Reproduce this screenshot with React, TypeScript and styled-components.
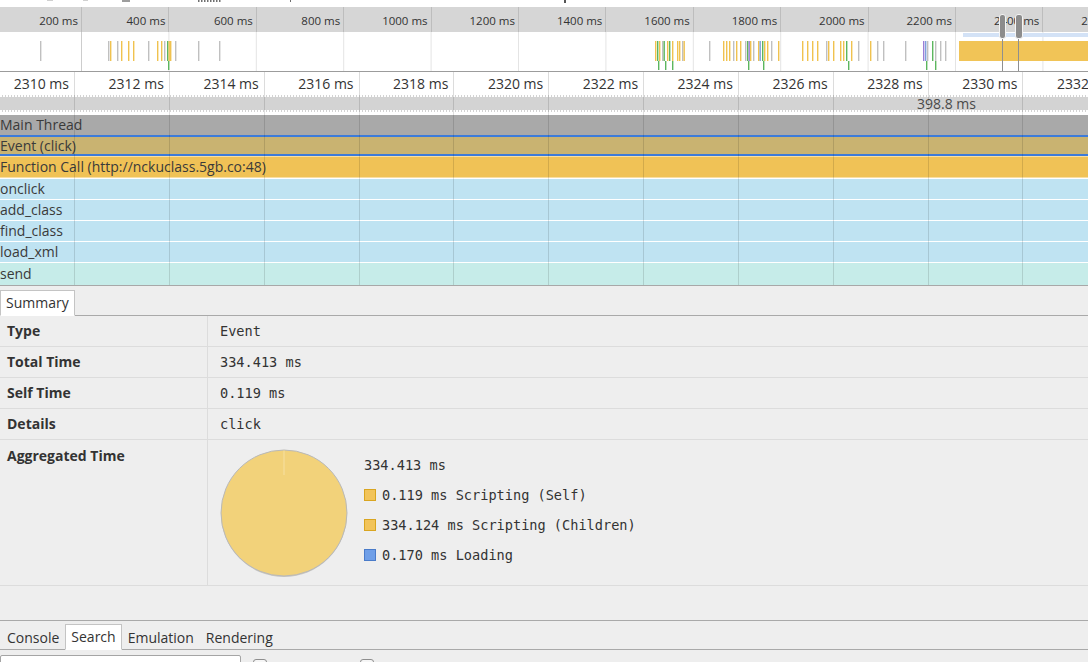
import React from "react";
import styled, { createGlobalStyle } from "styled-components";

const Global = createGlobalStyle`
  html, body { margin: 0; padding: 0; background: #eeeeee; }
  body { font-family: "Open Sans", "Noto Sans", sans-serif; color: #333; }
  * { box-sizing: border-box; }
`;

const Page = styled.div`
  width: 1088px;
  height: 662px;
  overflow: hidden;
  display: flex;
  flex-direction: column;
  background: #eeeeee;
`;

const TopStrip = styled.div`
  flex: none;
  height: 7px;
  background: #fff;
  display: flex;
`;

const Overview = styled.div`
  flex: none;
  position: relative;
  background: #fff;
  border-bottom: 1px solid #9c9c9c;
  overflow: hidden;
`;

const OverviewHeader = styled.div`
  display: flex;
  height: 25px;
  background: #d6d6d6;
  margin-left: -5.4px;
`;

const OverviewTick = styled.div`
  flex: none;
  width: 87.4px;
  border-right: 1px solid #bdbdbd;
  text-align: right;
  padding-right: 3px;
  font-size: 11.5px;
  line-height: 27px;
  color: #333;
  white-space: nowrap;
`;

const OverviewBody = styled.svg`
  display: block;
`;

const Handle = styled.div<{ $left: number; $w: number }>`
  position: absolute;
  top: 7px;
  left: ${(p) => p.$left}px;
  width: ${(p) => p.$w}px;
  height: 25px;
  background: #8c8c8c;
  border: 1px solid #f4f4f4;
  border-radius: 3px;
`;

const Ruler = styled.div`
  flex: none;
  height: 23px;
  background: #fff;
  overflow: hidden;
`;

const TickRow = styled.div`
  display: flex;
  height: 100%;
  margin-left: -19.85px;
`;

const RulerTick = styled.div`
  flex: none;
  width: 94.85px;
  border-right: 1px solid #dcdcdc;
  text-align: right;
  padding-right: 5px;
  font-size: 14px;
  line-height: 23px;
  color: #333;
  white-space: nowrap;
`;

const Timeline = styled.div`
  flex: none;
  position: relative;
  background: #fff;
  border-bottom: 1px solid #a8a8a8;
  overflow: hidden;
`;

const GridOverlay = styled.div`
  position: absolute;
  inset: 0;
  display: flex;
  margin-left: -19.85px;
  pointer-events: none;
`;

const GridCell = styled.div`
  flex: none;
  width: 94.85px;
  height: 100%;
  border-right: 1px solid rgba(0, 0, 0, 0.12);
`;

const Band = styled.div`
  height: 17px;
  margin-bottom: 3px;
  padding-left: 917px;
  font-size: 14px;
  line-height: 17px;
  color: #4a4a4a;
  white-space: nowrap;
  background:
    repeating-linear-gradient(90deg, #fff 0 2px, transparent 2px 3px) top left / 100% 2px no-repeat,
    repeating-linear-gradient(90deg, #fff 0 2px, transparent 2px 3px) bottom left / 100% 2px no-repeat,
    #d3d3d3;
`;

const Track = styled.div<{ $bg: string; $edge?: string; $ew?: number; $h?: number; $gap?: number }>`
  height: ${(p) => (p.$h ?? 20) + 2 * (p.$edge ? p.$ew ?? 1 : 0)}px;
  margin-top: ${(p) => p.$gap ?? 0}px;
  background: ${(p) => p.$bg};
  border-top: ${(p) => (p.$edge ? `${p.$ew ?? 1}px solid ${p.$edge}` : "none")};
  border-bottom: ${(p) => (p.$edge ? `${p.$ew ?? 1}px solid ${p.$edge}` : "none")};
  font-size: 14px;
  line-height: ${(p) => p.$h ?? 20}px;
  color: #3a3a3a;
  white-space: nowrap;
  overflow: hidden;
`;

const TabStrip = styled.div`
  flex: none;
  height: 30px;
  display: flex;
  align-items: flex-end;
  border-bottom: 1px solid #a9a9a9;
  background: #eeeeee;
`;

const Tab = styled.div<{ $active?: boolean }>`
  height: ${(p) => (p.$active ? 26 : 25)}px;
  margin-bottom: -1px;
  padding: 0 5px;
  font-size: 14px;
  line-height: 24px;
  color: #333;
  background: ${(p) => (p.$active ? "#fff" : "transparent")};
  border: 1px solid ${(p) => (p.$active ? "#c4c4c4" : "transparent")};
  border-bottom: ${(p) => (p.$active ? "1px solid #fff" : "none")};
  white-space: nowrap;
`;

const Table = styled.div`
  flex: none;
  display: flex;
  flex-direction: column;
`;

const Row = styled.div<{ $h?: number }>`
  display: grid;
  grid-template-columns: 208px 1fr;
  height: ${(p) => p.$h ?? 31}px;
  border-bottom: 1px solid #dcdcdc;
`;

const Label = styled.div<{ $top?: boolean }>`
  border-right: 1px solid #dcdcdc;
  padding-left: 7px;
  padding-top: ${(p) => (p.$top ? 6 : 0)}px;
  display: flex;
  align-items: ${(p) => (p.$top ? "flex-start" : "center")};
  font-size: 14px;
  font-weight: 700;
  line-height: 20px;
  color: #333;
`;

const Value = styled.div`
  padding-left: 12px;
  display: flex;
  align-items: center;
  font-family: "DejaVu Sans Mono", "Liberation Mono", monospace;
  font-size: 13.6px;
  color: #333;
  white-space: nowrap;
`;

const AggValue = styled.div`
  padding: 9px 0 0 12px;
  display: flex;
  gap: 14px;
  font-family: "DejaVu Sans Mono", "Liberation Mono", monospace;
  font-size: 13.6px;
  color: #333;
`;

const Legend = styled.div`
  display: flex;
  flex-direction: column;
  padding-top: 1px;
`;

const LegendLine = styled.div`
  height: 30px;
  display: flex;
  align-items: center;
  white-space: nowrap;
`;

const Swatch = styled.span<{ $fill: string; $line: string }>`
  flex: none;
  width: 12px;
  height: 12px;
  margin-right: 6px;
  background: ${(p) => p.$fill};
  border: 1px solid ${(p) => p.$line};
`;

const Spacer = styled.div`
  flex: none;
  height: 34px;
`;

const Drawer = styled.div`
  flex: none;
  border-top: 1px solid #a9a9a9;
`;

const DrawerTabs = styled.div`
  height: 29px;
  display: flex;
  align-items: flex-end;
  padding-left: 1px;
  border-bottom: 1px solid #a9a9a9;
`;

const InputRow = styled.div`
  display: flex;
  align-items: flex-start;
  padding-top: 5px;
  height: 40px;
`;

const SearchInput = styled.div`
  width: 241px;
  height: 22px;
  background: #fff;
  border: 1px solid #a5a5a5;
  border-radius: 2px;
`;

const Check = styled.div<{ $ml: number }>`
  margin-left: ${(p) => p.$ml}px;
  margin-top: 4px;
  width: 14px;
  height: 14px;
  border: 1px solid #8e8e8e;
  border-radius: 3px;
  background: #f6f6f6;
`;

const C = { Y: "#f0c24f", G: "#c0c0c0", Gr: "#5cb65e", P: "#9a7fd6", B: "#7fa1dc" };

const BARS: [number, string][] = [
  [40, C.G],
  [108, C.G], [110, C.Y], [117, C.G], [121, C.Y], [128, C.Y], [133, C.Y], [148, C.G], [157, C.Y],
  [161, C.Y], [164, C.G], [167, C.Gr], [168.5, C.Y], [170, C.Y], [175, C.G], [198, C.G], [219, C.G],
  [655, C.Y], [657, C.Gr], [659, C.Y], [662, C.G], [663.5, C.Gr], [667, C.Y], [669, C.Gr], [672, C.Y],
  [677, C.Y], [679, C.Y], [682, C.G], [683.5, C.Y],
  [709, C.G], [723, C.Y], [726, C.Y], [729, C.Y], [733, C.G], [736, C.Y], [740, C.Y], [745, C.G],
  [747, C.Gr], [748.5, C.P], [750, C.Y], [753, C.G], [758, C.Y], [759.5, C.B], [762, C.Gr], [764, C.Y],
  [767, C.Y], [771, C.G], [778, C.Y],
  [802, C.Y], [807, C.Y], [812, C.Y], [817, C.Y], [826, C.G], [828, C.Y], [833, C.Y], [840, C.Y],
  [843, C.Y], [846, C.Gr], [851, C.Y], [858, C.G],
  [870, C.Y], [877, C.G], [883, C.G], [905, C.G], [923, C.P], [925, C.B], [927, C.G], [932, C.Gr],
  [935, C.G], [940, C.G], [945, C.G],
];
const LOW = [168, 658, 665, 672, 748, 763, 848, 926, 935];

const overviewLabels = Array.from({ length: 13 }, (_, i) => `${(i + 1) * 200} ms`);
const rulerLabels = Array.from({ length: 12 }, (_, i) => `${2310 + i * 2} ms`);

function OverviewChart() {
  const lines = Array.from({ length: 12 }, (_, k) => 82 + 87.4 * k);
  return (
    <OverviewBody width={1088} height={39} viewBox="0 0 1088 39">
      {lines.map((x, i) => (
        <rect key={i} x={x - 1} y={0} width={1} height={39} fill={i === 0 ? "#cdcdcd" : "#e4e4e4"} />
      ))}
      {BARS.map(([x, c], i) => (
        <rect key={i} x={x} y={9} width={1.4} height={20} fill={c} />
      ))}
      {LOW.map((x, i) => (
        <rect key={i} x={x} y={29} width={1.4} height={9} fill={C.Gr} />
      ))}
      <rect x={963} y={1} width={125} height={4} fill="#d3e2f6" />
      <rect x={959} y={9} width={129} height={20} fill="#f1c457" />
      <rect x={1002} y={0} width={1} height={39} fill="#8f8f8f" />
      <rect x={1018} y={0} width={1} height={39} fill="#8f8f8f" />
    </OverviewBody>
  );
}

function TopMarks() {
  return (
    <svg width={1088} height={7} viewBox="0 0 1088 7">
      <rect x={47} y={0} width={6} height={1} fill="#d0d0d0" />
      <rect x={83} y={0} width={5} height={1} fill="#d0d0d0" />
      <rect x={122} y={0} width={8} height={2} fill="#9d9d9d" />
      {[198, 201, 204, 207, 210, 213, 216, 219].map((x) => (
        <rect key={x} x={x} y={0} width={1.5} height={2} fill="#707070" />
      ))}
      <rect x={290} y={0} width={1} height={2} fill="#6e6e6e" />
      <rect x={564} y={0} width={2} height={3} fill="#555" />
    </svg>
  );
}

function Pie() {
  return (
    <svg width={130} height={130} viewBox="0 0 130 130">
      <circle cx={64} cy={65} r={63} fill="#c9c9c9" />
      <circle cx={64} cy={64} r={63} fill="#f2d27a" stroke="#b9b9b9" strokeWidth={1} />
      <line x1={64} y1={1.5} x2={64} y2={26} stroke="#f6e0a2" strokeWidth={1} />
    </svg>
  );
}

export default function App() {
  return (
    <Page>
      <Global />
      <TopStrip>
        <TopMarks />
      </TopStrip>
      <Overview>
        <OverviewHeader>
          {overviewLabels.map((l) => (
            <OverviewTick key={l}>{l}</OverviewTick>
          ))}
        </OverviewHeader>
        <OverviewChart />
        <Handle $left={999} $w={7} />
        <Handle $left={1015} $w={8} />
      </Overview>
      <Ruler>
        <TickRow>
          {rulerLabels.map((l) => (
            <RulerTick key={l}>{l}</RulerTick>
          ))}
        </TickRow>
      </Ruler>
      <Timeline>
        <Band>398.8 ms</Band>
        <Track $bg="#a9a9a9">Main Thread</Track>
        <Track $bg="#c9b371" $edge="#3d7bd9" $ew={2} $h={17}>
          Event (click)
        </Track>
        <Track $bg="#f0c256" $edge="#f8dfa2">Function Call (http://nckuclass.5gb.co:48)</Track>
        <Track $bg="#bfe3f2" $gap={1}>onclick</Track>
        <Track $bg="#bfe3f2" $gap={1}>add_class</Track>
        <Track $bg="#bfe3f2" $gap={1}>find_class</Track>
        <Track $bg="#bfe3f2" $gap={1}>load_xml</Track>
        <Track $bg="#c6ece9" $gap={1} $h={22}>send</Track>
        <GridOverlay>
          {rulerLabels.map((l) => (
            <GridCell key={l} />
          ))}
        </GridOverlay>
      </Timeline>
      <TabStrip>
        <Tab $active>Summary</Tab>
      </TabStrip>
      <Table>
        <Row>
          <Label>Type</Label>
          <Value>Event</Value>
        </Row>
        <Row>
          <Label>Total Time</Label>
          <Value>334.413 ms</Value>
        </Row>
        <Row>
          <Label>Self Time</Label>
          <Value>0.119 ms</Value>
        </Row>
        <Row>
          <Label>Details</Label>
          <Value>click</Value>
        </Row>
        <Row $h={146}>
          <Label $top>Aggregated Time</Label>
          <AggValue>
            <Pie />
            <Legend>
              <LegendLine>334.413 ms</LegendLine>
              <LegendLine>
                <Swatch $fill="#f2c45a" $line="#d9a520" />
                0.119 ms Scripting (Self)
              </LegendLine>
              <LegendLine>
                <Swatch $fill="#f2c45a" $line="#d9a520" />
                334.124 ms Scripting (Children)
              </LegendLine>
              <LegendLine>
                <Swatch $fill="#6f9fe8" $line="#4a7bc9" />
                0.170 ms Loading
              </LegendLine>
            </Legend>
          </AggValue>
        </Row>
      </Table>
      <Spacer />
      <Drawer>
        <DrawerTabs>
          <Tab>Console</Tab>
          <Tab $active>Search</Tab>
          <Tab>Emulation</Tab>
          <Tab>Rendering</Tab>
        </DrawerTabs>
        <InputRow>
          <SearchInput />
          <Check $ml={12} />
          <Check $ml={93} />
        </InputRow>
      </Drawer>
    </Page>
  );
}
